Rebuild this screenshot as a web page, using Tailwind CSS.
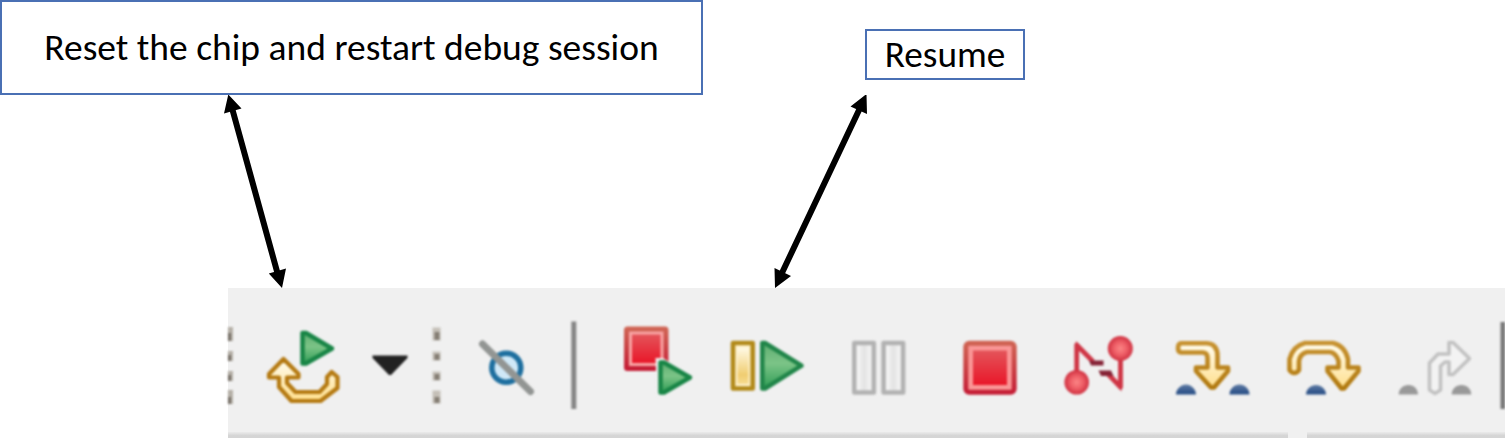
<!DOCTYPE html>
<html lang="en">
<head>
<meta charset="utf-8">
<title>Debug toolbar</title>
<script src="https://cdn.jsdelivr.net/npm/@tailwindcss/browser@4"></script>
</head>
<body class="w-[1505px] h-[438px] overflow-hidden bg-white text-black font-['Carlito','Lato',sans-serif]">
<header class="flex h-[95px] items-start">
  <div class="flex h-[95px] w-[703px] items-center justify-center border-2 border-[#4a70b4] whitespace-nowrap text-[37.5px] leading-none">Reset the chip and restart debug session</div>
  <div class="mt-[29px] ml-[162px] flex h-[51px] w-[160px] items-center justify-center border-2 border-[#4a70b4] whitespace-nowrap text-[37.3px] leading-none">Resume</div>
</header>
<svg class="block h-[193px] w-[1505px]" viewBox="0 95 1505 193">
  <g stroke="#000" stroke-width="6"><path d="M232 108L278 275M860 108L781 275"/></g>
  <path d="M228.300 94.500L241.500 108.500L224 113.500zM282 288L268.800 273.500L286 268.500zM866.500 94L850.500 106.500L867 114zM775 288L774.500 268L791 276z"/>
</svg>
<main class="ml-[228px] flex h-[150px] w-[1277px] flex-col justify-between bg-[#f0f0f0]">
  <div class="flex h-[144px] shrink-0 blur-[0.9px]">
    <!-- grip -->
    <svg class="h-[144px] w-[27px] shrink-0" viewBox="228 288 27 144" fill="#b5b0a7"><path d="M228 327h5v14h-5zM228 351h5v10h-5zM228 371h5v10h-5zM228 390h5v14h-5z"/><path fill="#777067" d="M228 333h3v8h-3zM228 355h3v6h-3zM228 375h3v6h-3zM228 397h3v7h-3z"/></svg>
    <!-- restart -->
    <svg class="h-[144px] w-[105px] shrink-0" viewBox="255 288 105 144">
      <defs>
        <linearGradient id="gr" x1="0" y1="0" x2="0" y2="1"><stop offset="0" stop-color="#5fae72"/><stop offset=".45" stop-color="#7cc487"/><stop offset="1" stop-color="#2f9d55"/></linearGradient>
        <linearGradient id="rd" x1="0" y1="0" x2="0" y2="1"><stop offset="0" stop-color="#e4545a"/><stop offset="1" stop-color="#e91729"/></linearGradient>
        <linearGradient id="rb" x1="0" y1="0" x2="0" y2="1"><stop offset="0" stop-color="#cf6353"/><stop offset="1" stop-color="#c51e36"/></linearGradient>
        <linearGradient id="yl" x1="0" y1="0" x2="0" y2="1"><stop offset="0" stop-color="#fffdf0"/><stop offset="1" stop-color="#ffdf8d"/></linearGradient>
        <linearGradient id="br" x1="0" y1="0" x2="0" y2="1"><stop offset="0" stop-color="#c79230"/><stop offset="1" stop-color="#b1790f"/></linearGradient>
        <linearGradient id="ht" x1="0" y1="0" x2="0" y2="1"><stop offset="0" stop-color="#fff9e4"/><stop offset=".75" stop-color="#f0cd70"/><stop offset="1" stop-color="#f7dc90"/></linearGradient>
        <linearGradient id="pg"><stop offset="0" stop-color="#fff"/><stop offset=".5" stop-color="#e3e3e3"/><stop offset="1" stop-color="#fcfcfc"/></linearGradient>
        <radialGradient id="ball"><stop offset="0" stop-color="#fb8585"/><stop offset=".5" stop-color="#ef6068"/><stop offset="1" stop-color="#cf3040"/></radialGradient>
        <linearGradient id="dm" x1="0" y1="0" x2="0" y2="1"><stop offset="0" stop-color="#5f7ba4"/><stop offset="1" stop-color="#234a83"/></linearGradient>
      </defs>
      <path d="M302.500 333H306L332 348.500L306 363.500H302.500z" fill="url(#gr)" stroke="#188546" stroke-width="4.500" stroke-linejoin="round"/>
      <path d="M283.500 359L269 374V377.500H279V387L291.500 401H320.500L337.500 388V377L331.700 372L327 377V384L319.500 392H295.500L287 383V377.500H298.500V374z" fill="url(#yl)" stroke="#b57a12" stroke-width="4.200" stroke-linejoin="round"/>
    </svg>
    <!-- dropdown caret -->
    <svg class="h-[144px] w-[62px] shrink-0" viewBox="360 288 62 144"><path d="M372.500 355.500H407.500V358L391 375H389L372.500 358z" fill="#212121"/></svg>
    <!-- grip -->
    <svg class="h-[144px] w-[38px] shrink-0" viewBox="422 288 38 144" fill="#c4bfb7"><path d="M432.500 327.500h8v13h-8zM432.500 351.500h8v9h-8zM432.500 371.500h8v9h-8zM432.500 390.500h8v13h-8z"/><path fill="#847d73" d="M434.500 332h5v8h-5zM434.500 354h5v6h-5zM434.500 374h5v6h-5zM434.500 397h5v6h-5z"/></svg>
    <!-- skip breakpoints -->
    <svg class="h-[144px] w-[90px] shrink-0" viewBox="460 288 90 144"><circle cx="506.300" cy="367.700" r="14.500" fill="#cfe8f7" stroke="#1e6f9f" stroke-width="5.500"/><path d="M482.500 344L530.500 391.500" stroke="#929593" stroke-width="7" stroke-linecap="round"/></svg>
    <!-- separator -->
    <svg class="h-[144px] w-[60px] shrink-0" viewBox="550 288 60 144"><path d="M571.300 321.500h5v87.500h-5z" fill="#858585"/></svg>
    <!-- terminate and relaunch -->
    <svg class="h-[144px] w-[105px] shrink-0" viewBox="610 288 105 144">
      <rect x="626.500" y="329" width="39.500" height="39.500" rx="1" fill="#f9a5a5" stroke="url(#rb)" stroke-width="5"/><rect x="632" y="334.500" width="28.500" height="28.500" fill="url(#rd)"/>
      <path d="M655.500 358H663L694 377.500L663 397H657z" fill="#f0f0f0"/>
      <path d="M660.500 362.500H664L690 377.500L664 392.500H660.500z" fill="url(#gr)" stroke="#188546" stroke-width="4.500" stroke-linejoin="round"/>
    </svg>
    <!-- resume -->
    <svg class="h-[144px] w-[115px] shrink-0" viewBox="715 288 115 144"><rect x="733" y="343" width="19.700" height="45.500" fill="#fff3cf" stroke="#b28a1a" stroke-width="4.600" stroke-linejoin="round"/><rect x="737.500" y="348" width="11" height="36" fill="url(#ht)"/><path d="M762.300 343H765L801.500 365.700L765 388.500H762.300z" fill="url(#gr)" stroke="#208549" stroke-width="4.500" stroke-linejoin="round"/></svg>
    <!-- suspend -->
    <svg class="h-[144px] w-[105px] shrink-0" viewBox="830 288 105 144" fill="url(#pg)" stroke="#b2b2b2" stroke-width="4.600" stroke-linejoin="round"><rect x="854.300" y="343" width="19.500" height="49.500"/><rect x="883.600" y="343" width="19.500" height="49.500"/></svg>
    <!-- terminate -->
    <svg class="h-[144px] w-[115px] shrink-0" viewBox="935 288 115 144"><rect x="965.800" y="343.200" width="48.400" height="49" rx="3.500" fill="#fa9696" stroke="url(#rb)" stroke-width="5"/><rect x="973" y="350.500" width="34" height="34.500" fill="url(#rd)"/></svg>
    <!-- disconnect -->
    <svg class="h-[144px] w-[110px] shrink-0" viewBox="1050 288 110 144">
      <path d="M1076.700 375V345L1093 361.500M1108 374L1120.500 387V355" fill="none" stroke="#cf3545" stroke-width="4.800" stroke-linejoin="round"/>
      <path d="M1076 341L1084 350H1076zM1121.500 391.500L1113 382H1121.500z" fill="#cf3545"/>
      <path d="M1089 360.500H1103.500V365.500H1091zM1098.500 370.500H1111L1113.500 376H1101z" fill="#852336"/>
      <circle cx="1076.700" cy="382.300" r="12.300" fill="url(#ball)"/><circle cx="1120.300" cy="348.500" r="12.500" fill="url(#ball)"/>
    </svg>
    <!-- step into -->
    <svg class="h-[144px] w-[110px] shrink-0" viewBox="1160 288 110 144">
      <path d="M1181 343.300H1207Q1217.500 344 1217.500 356V367.500H1228V371L1214 387.500H1211L1196 371V367.500H1207.500V358Q1207.500 353 1203 352.500H1181Q1178 352 1178 348Q1178 344 1181 343.300z" fill="url(#yl)" stroke="url(#br)" stroke-width="4.600" stroke-linejoin="round"/>
      <path d="M1176 394.500C1176 389 1181 384.500 1186 384.500S1196 389 1196 394.500zM1229.500 394.500C1229.500 389 1234 384.500 1239.500 384.500S1249.500 389 1249.500 394.500z" fill="url(#dm)"/>
    </svg>
    <!-- step over -->
    <svg class="h-[144px] w-[115px] shrink-0" viewBox="1270 288 115 144">
      <path d="M1289.500 370V359Q1293 346 1305 343H1333Q1345 346 1348 359V367.500H1358.500V371L1344 388.500H1341.500L1327.500 371V367.500H1338.500V361Q1336 353 1330 352H1307Q1300 354 1299 361V370Q1297 373 1294.300 373Q1291.500 373 1289.500 370z" fill="url(#yl)" stroke="url(#br)" stroke-width="4.600" stroke-linejoin="round"/>
      <path d="M1306 394.500C1306 389 1311 385 1316 385S1326 389 1326 394.500z" fill="url(#dm)"/>
    </svg>
    <!-- step return -->
    <svg class="h-[144px] w-[120px] shrink-0" viewBox="1385 288 120 144">
      <path d="M1429.500 390V363L1438 354H1449V342.500H1453L1469.500 358.500L1453 374.500H1449V362H1445L1440.500 366V390L1435 393.500z" fill="#f3f3f3" stroke="#c2c2c2" stroke-width="3.600" stroke-linejoin="round"/>
      <path d="M1398.700 394.500C1398.700 389 1403 385 1408.500 385S1418 389 1418 394.500zM1451.700 394.500C1451.700 389 1456 385 1461.500 385S1471.300 389 1471.300 394.500z" fill="#999"/>
      <path d="M1500.500 322h5v87h-5z" fill="#777"/>
    </svg>
  </div>
  <div class="flex h-[6px] shrink-0 justify-between"><div class="w-[1060px] bg-linear-to-b from-[#ebebeb] to-[#d5d5d5] to-60%"></div><div class="w-[198px] bg-linear-to-b from-[#ebebeb] to-[#d5d5d5] to-60%"></div></div>
</main>
</body>
</html>
